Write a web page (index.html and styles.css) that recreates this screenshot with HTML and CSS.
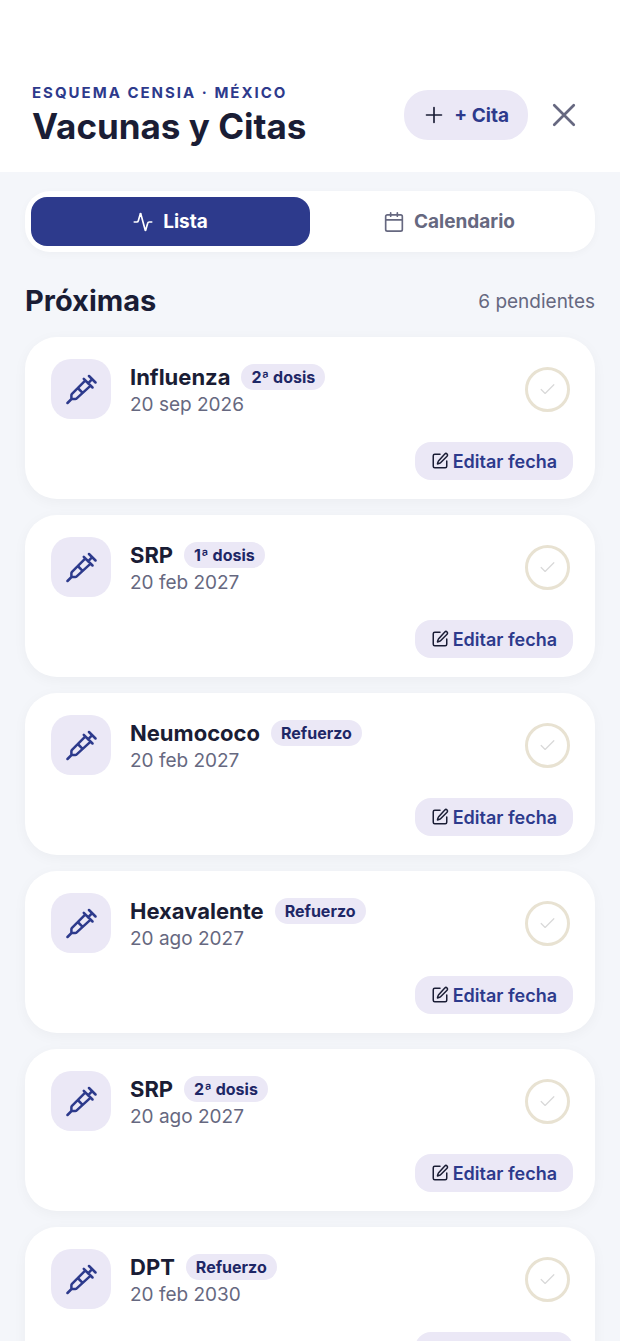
FILE: index.html
```html
<!DOCTYPE html>
<html lang="es">
<head>
  <meta charset="UTF-8">
  <meta name="viewport" content="width=device-width, initial-scale=1">
  <title>Vacunas y Citas</title>
  <link rel="stylesheet" href="styles.css">
</head>
<body>

<!-- Shared icons -->
<svg class="sprite" aria-hidden="true">
  <symbol id="i-syringe" viewBox="0 0 32 32">
    <path d="M2.5 30l4-4M24 3l6.500 6.500M27.200 6.200l-4.200 4.200M18.800 5.800l8.700 8.700M20.400 7.400L7 20.800a2 2 0 0 0-.6 1.400V26h3.900a2 2 0 0 0 1.400-.6L25.600 12.600M12.800 15l4.800 4.800"/>
  </symbol>
  <symbol id="i-check" viewBox="0 0 24 24">
    <path d="M20 6L9 17l-5-5"/>
  </symbol>
  <symbol id="i-edit" viewBox="0 0 24 24">
    <path d="M12 3H5a2 2 0 0 0-2 2v14a2 2 0 0 0 2 2h14a2 2 0 0 0 2-2v-7M18.400 2.600a2.100 2.100 0 0 1 3 3L12.400 14.600a2 2 0 0 1-.9.500l-2.900.8.800-2.900a2 2 0 0 1 .5-.9z"/>
  </symbol>
</svg>

<div class="screen">
  <header class="header">
    <div class="heading">
      <p class="eyebrow">ESQUEMA CENSIA · MÉXICO</p>
      <h1>Vacunas y Citas</h1>
    </div>
    <button class="add-btn" type="button">
      <svg viewBox="0 0 24 24"><path d="M12 3v18M3 12h18"/></svg>
      + Cita
    </button>
    <button class="close-btn" type="button" aria-label="Cerrar">
      <svg viewBox="0 0 24 24"><path d="M3 3l18 18M21 3L3 21"/></svg>
    </button>
  </header>

  <main class="content">
    <nav class="tabs">
      <button class="tab active" type="button">
        <svg viewBox="0 0 24 24"><path d="M22.500 12h-3a2 2 0 0 0-1.900 1.500l-2.400 8.300a.25.25 0 0 1-.5 0L9.300 2.200a.25.25 0 0 0-.5 0l-2.400 8.300A2 2 0 0 1 4.500 12h-3"/></svg>
        Lista
      </button>
      <button class="tab" type="button">
        <svg viewBox="0 0 24 24"><path d="M8 1v4M16 1v4M2 9.500h20M4 3.500h16a2 2 0 0 1 2 2V21a2 2 0 0 1-2 2H4a2 2 0 0 1-2-2V5.500a2 2 0 0 1 2-2z"/></svg>
        Calendario
      </button>
    </nav>

    <div class="section-head">
      <h2>Próximas</h2>
      <span class="count">6 pendientes</span>
    </div>

    <section class="list">
      <article class="card">
        <div class="card-top">
          <div class="icon-box"><svg><use href="#i-syringe"/></svg></div>
          <div class="info">
            <div class="name-row"><h3>Influenza</h3><span class="badge">2ª dosis</span></div>
            <p class="date">20 sep 2026</p>
          </div>
          <button class="check-btn" type="button" aria-label="Marcar como aplicada"><svg><use href="#i-check"/></svg></button>
        </div>
        <button class="edit-btn" type="button"><svg><use href="#i-edit"/></svg>Editar fecha</button>
      </article>

      <article class="card">
        <div class="card-top">
          <div class="icon-box"><svg><use href="#i-syringe"/></svg></div>
          <div class="info">
            <div class="name-row"><h3>SRP</h3><span class="badge">1ª dosis</span></div>
            <p class="date">20 feb 2027</p>
          </div>
          <button class="check-btn" type="button" aria-label="Marcar como aplicada"><svg><use href="#i-check"/></svg></button>
        </div>
        <button class="edit-btn" type="button"><svg><use href="#i-edit"/></svg>Editar fecha</button>
      </article>

      <article class="card">
        <div class="card-top">
          <div class="icon-box"><svg><use href="#i-syringe"/></svg></div>
          <div class="info">
            <div class="name-row"><h3>Neumococo</h3><span class="badge">Refuerzo</span></div>
            <p class="date">20 feb 2027</p>
          </div>
          <button class="check-btn" type="button" aria-label="Marcar como aplicada"><svg><use href="#i-check"/></svg></button>
        </div>
        <button class="edit-btn" type="button"><svg><use href="#i-edit"/></svg>Editar fecha</button>
      </article>

      <article class="card">
        <div class="card-top">
          <div class="icon-box"><svg><use href="#i-syringe"/></svg></div>
          <div class="info">
            <div class="name-row"><h3>Hexavalente</h3><span class="badge">Refuerzo</span></div>
            <p class="date">20 ago 2027</p>
          </div>
          <button class="check-btn" type="button" aria-label="Marcar como aplicada"><svg><use href="#i-check"/></svg></button>
        </div>
        <button class="edit-btn" type="button"><svg><use href="#i-edit"/></svg>Editar fecha</button>
      </article>

      <article class="card">
        <div class="card-top">
          <div class="icon-box"><svg><use href="#i-syringe"/></svg></div>
          <div class="info">
            <div class="name-row"><h3>SRP</h3><span class="badge">2ª dosis</span></div>
            <p class="date">20 ago 2027</p>
          </div>
          <button class="check-btn" type="button" aria-label="Marcar como aplicada"><svg><use href="#i-check"/></svg></button>
        </div>
        <button class="edit-btn" type="button"><svg><use href="#i-edit"/></svg>Editar fecha</button>
      </article>

      <article class="card">
        <div class="card-top">
          <div class="icon-box"><svg><use href="#i-syringe"/></svg></div>
          <div class="info">
            <div class="name-row"><h3>DPT</h3><span class="badge">Refuerzo</span></div>
            <p class="date">20 feb 2030</p>
          </div>
          <button class="check-btn" type="button" aria-label="Marcar como aplicada"><svg><use href="#i-check"/></svg></button>
        </div>
        <button class="edit-btn" type="button"><svg><use href="#i-edit"/></svg>Editar fecha</button>
      </article>
    </section>
  </main>
</div>

</body>
</html>
```
FILE: styles.css
```css
* {
  box-sizing: border-box;
}
body {
  margin: 0;
  font-family: Inter, "Liberation Sans", sans-serif;
  background: #f4f6fa;
  color: #1a1d35;
}
h1, h2, h3, p {
  margin: 0;
}
button {
  border: none;
  padding: 0;
  font-family: inherit;
  cursor: pointer;
}
svg {
  display: block;
  flex: none;
  fill: none;
  stroke: currentColor;
  stroke-width: 2;
  stroke-linecap: round;
  stroke-linejoin: round;
}
.sprite {
  display: none;
}

.screen {
  height: 100vh;
  display: flex;
  flex-direction: column;
}

/* Header */
.header {
  flex: none;
  display: flex;
  align-items: center;
  gap: 12px;
  padding: 82px 32px 24px;
  background: #fff;
}
.heading {
  flex: 1;
}
.eyebrow {
  font-size: 15px;
  line-height: 22px;
  font-weight: 700;
  letter-spacing: 2px;
  color: #2d3a8c;
}
h1 {
  font-size: 35px;
  line-height: 44px;
  font-weight: 700;
}
.add-btn {
  display: flex;
  align-items: center;
  gap: 10px;
  height: 50px;
  padding: 0 19px 0 20px;
  border-radius: 24px;
  background: #ebe8f6;
  color: #2d3a8c;
  font-size: 19px;
  font-weight: 700;
}
.add-btn svg {
  width: 20px;
  height: 20px;
  color: #1a1d35;
}
.close-btn {
  display: grid;
  place-items: center;
  width: 48px;
  height: 48px;
  background: none;
  color: #666880;
}
.close-btn svg {
  width: 26px;
  height: 26px;
  stroke-width: 2.5;
}

/* Scrolling area */
.content {
  flex: 1;
  min-height: 0;
  overflow-y: auto;
  scrollbar-width: none;
  padding: 19px 25px 32px;
}

.tabs {
  display: flex;
  padding: 6px;
  border-radius: 25px;
  background: #fff;
  box-shadow: 0 2px 8px rgba(0, 0, 0, 0.03);
}
.tab {
  flex: 1;
  display: flex;
  align-items: center;
  justify-content: center;
  gap: 10px;
  height: 49px;
  border-radius: 16px;
  background: none;
  color: #666880;
  font-size: 19px;
  font-weight: 700;
}
.tab svg {
  width: 20px;
  height: 20px;
}
.tab.active {
  background: #2d3a8c;
  color: #fff;
}

.section-head {
  display: flex;
  align-items: center;
  justify-content: space-between;
  padding: 31px 0 18px;
}
h2 {
  font-size: 29px;
  line-height: 36px;
  font-weight: 700;
}
.count {
  font-size: 19px;
  color: #666880;
}

/* Vaccine cards */
.list {
  display: flex;
  flex-direction: column;
  gap: 16px;
}
.card {
  display: flex;
  flex-direction: column;
  gap: 23px;
  padding: 22px 22px 19px 26px;
  border-radius: 32px;
  background: #fff;
  box-shadow: 0 3px 14px rgba(0, 0, 0, 0.04);
}
.card-top {
  display: flex;
  align-items: center;
  gap: 19px;
  padding-right: 3px;
}
.icon-box {
  display: grid;
  place-items: center;
  width: 60px;
  height: 60px;
  border-radius: 20px;
  background: #ebe8f6;
  color: #2d3a8c;
}
.icon-box svg {
  width: 32px;
  height: 32px;
  stroke-width: 2.5;
}
.info {
  flex: 1;
  padding-top: 4px;
}
.name-row {
  display: flex;
  align-items: center;
  gap: 11px;
}
h3 {
  font-size: 22px;
  line-height: 28px;
  font-weight: 700;
}
.badge {
  padding: 2px 10px;
  border-radius: 13px;
  background: #ebe8f6;
  color: #1e2766;
  font-size: 16px;
  line-height: 22px;
  font-weight: 700;
}
.date {
  font-size: 19px;
  line-height: 28px;
  color: #666880;
}
.check-btn {
  display: grid;
  place-items: center;
  width: 45px;
  height: 45px;
  border: 3px solid #e8e2d2;
  border-radius: 50%;
  background: none;
  color: #d8d8d8;
}
.check-btn svg {
  width: 19px;
  height: 19px;
  stroke-width: 1.5;
}
.edit-btn {
  align-self: flex-end;
  display: flex;
  align-items: center;
  gap: 4px;
  height: 38px;
  padding: 0 16px;
  border-radius: 16px;
  background: #ebe8f6;
  color: #2d3a8c;
  font-size: 18px;
  font-weight: 600;
}
.edit-btn svg {
  width: 18px;
  height: 18px;
  color: #1a1d35;
}
```
